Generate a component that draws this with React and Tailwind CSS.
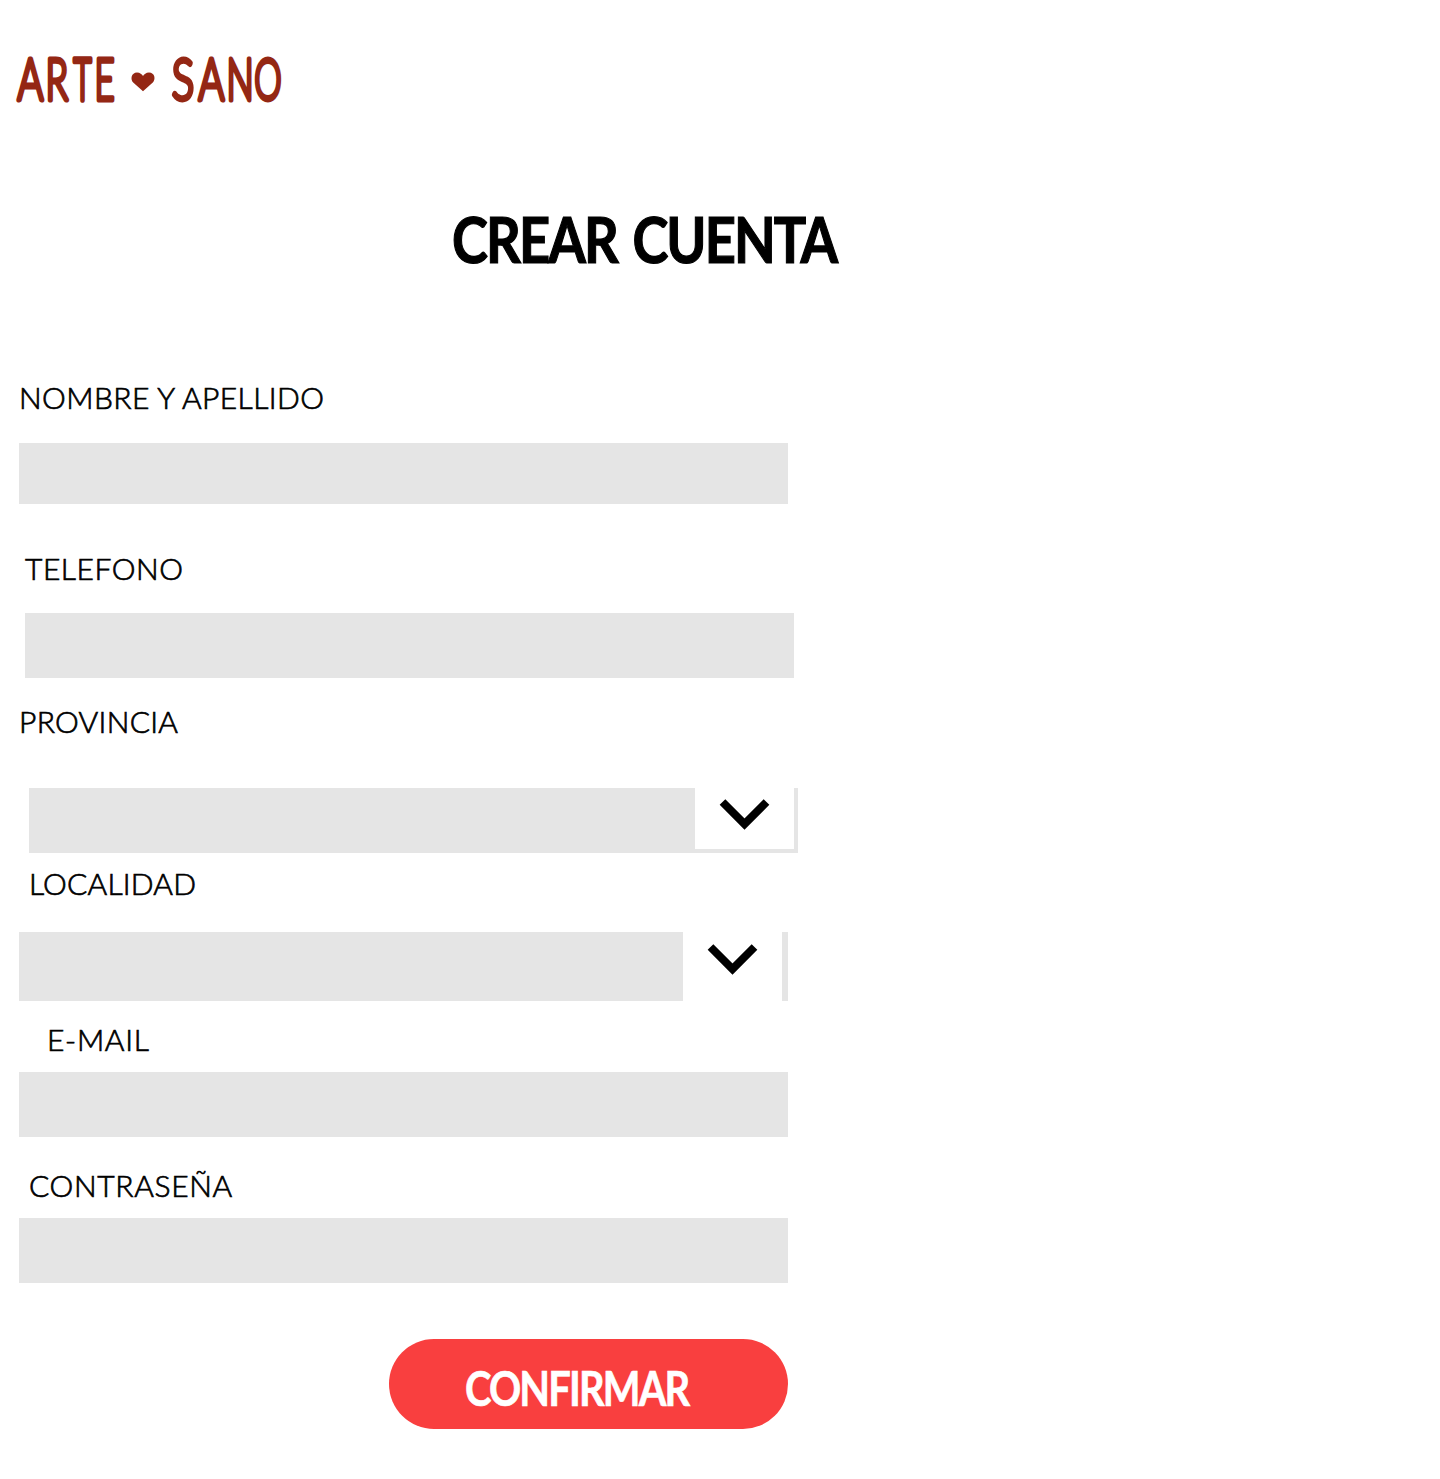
import React from "react";

// letter, x, advance width, stroke width
const WORDMARK = [
  ["A", 17.6, 25.8, 4.8],
  ["R", 45.6, 22.6, 4.8],
  ["T", 73.6, 18, 5.4],
  ["E", 94.6, 20.2, 4.8],
  ["S", 171.8, 22.4, 4.8],
  ["A", 198.6, 25.8, 4.8],
  ["N", 226.4, 27.2, 4.8],
  ["O", 254.3, 27.4, 4.8],
];

function Logo() {
  return (
    <svg
      width="300"
      height="60"
      viewBox="0 50 300 60"
      fill="#942714"
      role="img"
      aria-label="ARTE SANO"
      className="overflow-visible"
    >
      {WORDMARK.map(([letter, x, width, stroke], i) => (
        <text
          key={i}
          x={x}
          y="100"
          textLength={width}
          lengthAdjust="spacingAndGlyphs"
          stroke="#942714"
          strokeWidth={stroke}
          strokeLinejoin="round"
          className="font-['Lato',sans-serif] text-[56.5px] font-light"
        >
          {letter}
        </text>
      ))}
      <path d="M143 91.2 L133.2 82.6 C130 79 131.4 72.6 137 72.4 C140 72.4 142 74.2 143 76 C144 74.2 146 72.4 149 72.4 C154.8 72.6 156 79 152.8 82.6 Z" />
    </svg>
  );
}

function Label({ className, children }) {
  return (
    <label
      className={`block h-9 whitespace-nowrap font-['Lato',sans-serif] text-[30px] font-light leading-9 text-black [-webkit-text-stroke:0.7px_black] ${className}`}
    >
      {children}
    </label>
  );
}

function Field({ className = "", children }) {
  return <div className={`flex w-[769px] bg-[#e5e5e5] ${className}`}>{children}</div>;
}

function Toggle({ className }) {
  return (
    <button type="button" aria-label="Abrir" className={`flex w-[99px] items-start bg-white ${className}`}>
      <svg width="99" height="61" viewBox="0 0 99 61" fill="none">
        <path d="M27.5 14 L49.5 36 L71.5 14" stroke="black" strokeWidth="8" />
      </svg>
    </button>
  );
}

export default function App() {
  return (
    <div className="h-[1479px] w-[1440px] overflow-hidden bg-white pt-[50px]">
      <Logo />
      <h1 className="ml-[452px] mt-[91px] h-[75px] w-max origin-left scale-x-[0.86] whitespace-nowrap font-['Lato',sans-serif] text-[63px] font-bold leading-[75px] tracking-[-2.2px] text-black [word-spacing:5px] [-webkit-text-stroke:1.2px_black]">
        CREAR CUENTA
      </h1>
      <form className="mt-[103px] pl-[19px]">
        <Label className="tracking-[0.42px]">NOMBRE Y APELLIDO</Label>
        <Field className="mt-7 h-[61px]" />
        <Label className="ml-1.5 mt-[46px] tracking-[0.55px]">TELEFONO</Label>
        <Field className="ml-1.5 mt-[27px] h-[65px]" />
        <Label className="mt-[25px] tracking-[0.3px]">PROVINCIA</Label>
        <Field className="ml-2.5 mt-[49px] h-[65px] justify-end pr-1">
          <Toggle className="h-[61px]" />
        </Field>
        <Label className="ml-2.5 mt-3 tracking-[0.2px]">LOCALIDAD</Label>
        <Field className="mt-[31px] h-[69px] justify-end pr-1.5">
          <Toggle className="h-[69px] pt-[0.6px]" />
        </Field>
        <Label className="ml-7 mt-5 tracking-[0.7px]">E-MAIL</Label>
        <Field className="mt-[15px] h-[65px]" />
        <Label className="ml-2.5 mt-[30px] tracking-[0.65px]">CONTRASEÑA</Label>
        <Field className="mt-[15px] h-[65px]" />
        <button
          type="button"
          className="ml-[370px] mt-14 flex h-[90px] w-[399px] items-start rounded-full bg-[#f93f3f] pl-[76px] pt-[21px]"
        >
          <span className="origin-left scale-x-[0.85] whitespace-nowrap font-['Lato',sans-serif] text-[47px] font-bold leading-[57px] tracking-[-2.2px] text-white [-webkit-text-stroke:0.6px_white]">
            CONFIRMAR
          </span>
        </button>
      </form>
    </div>
  );
}
